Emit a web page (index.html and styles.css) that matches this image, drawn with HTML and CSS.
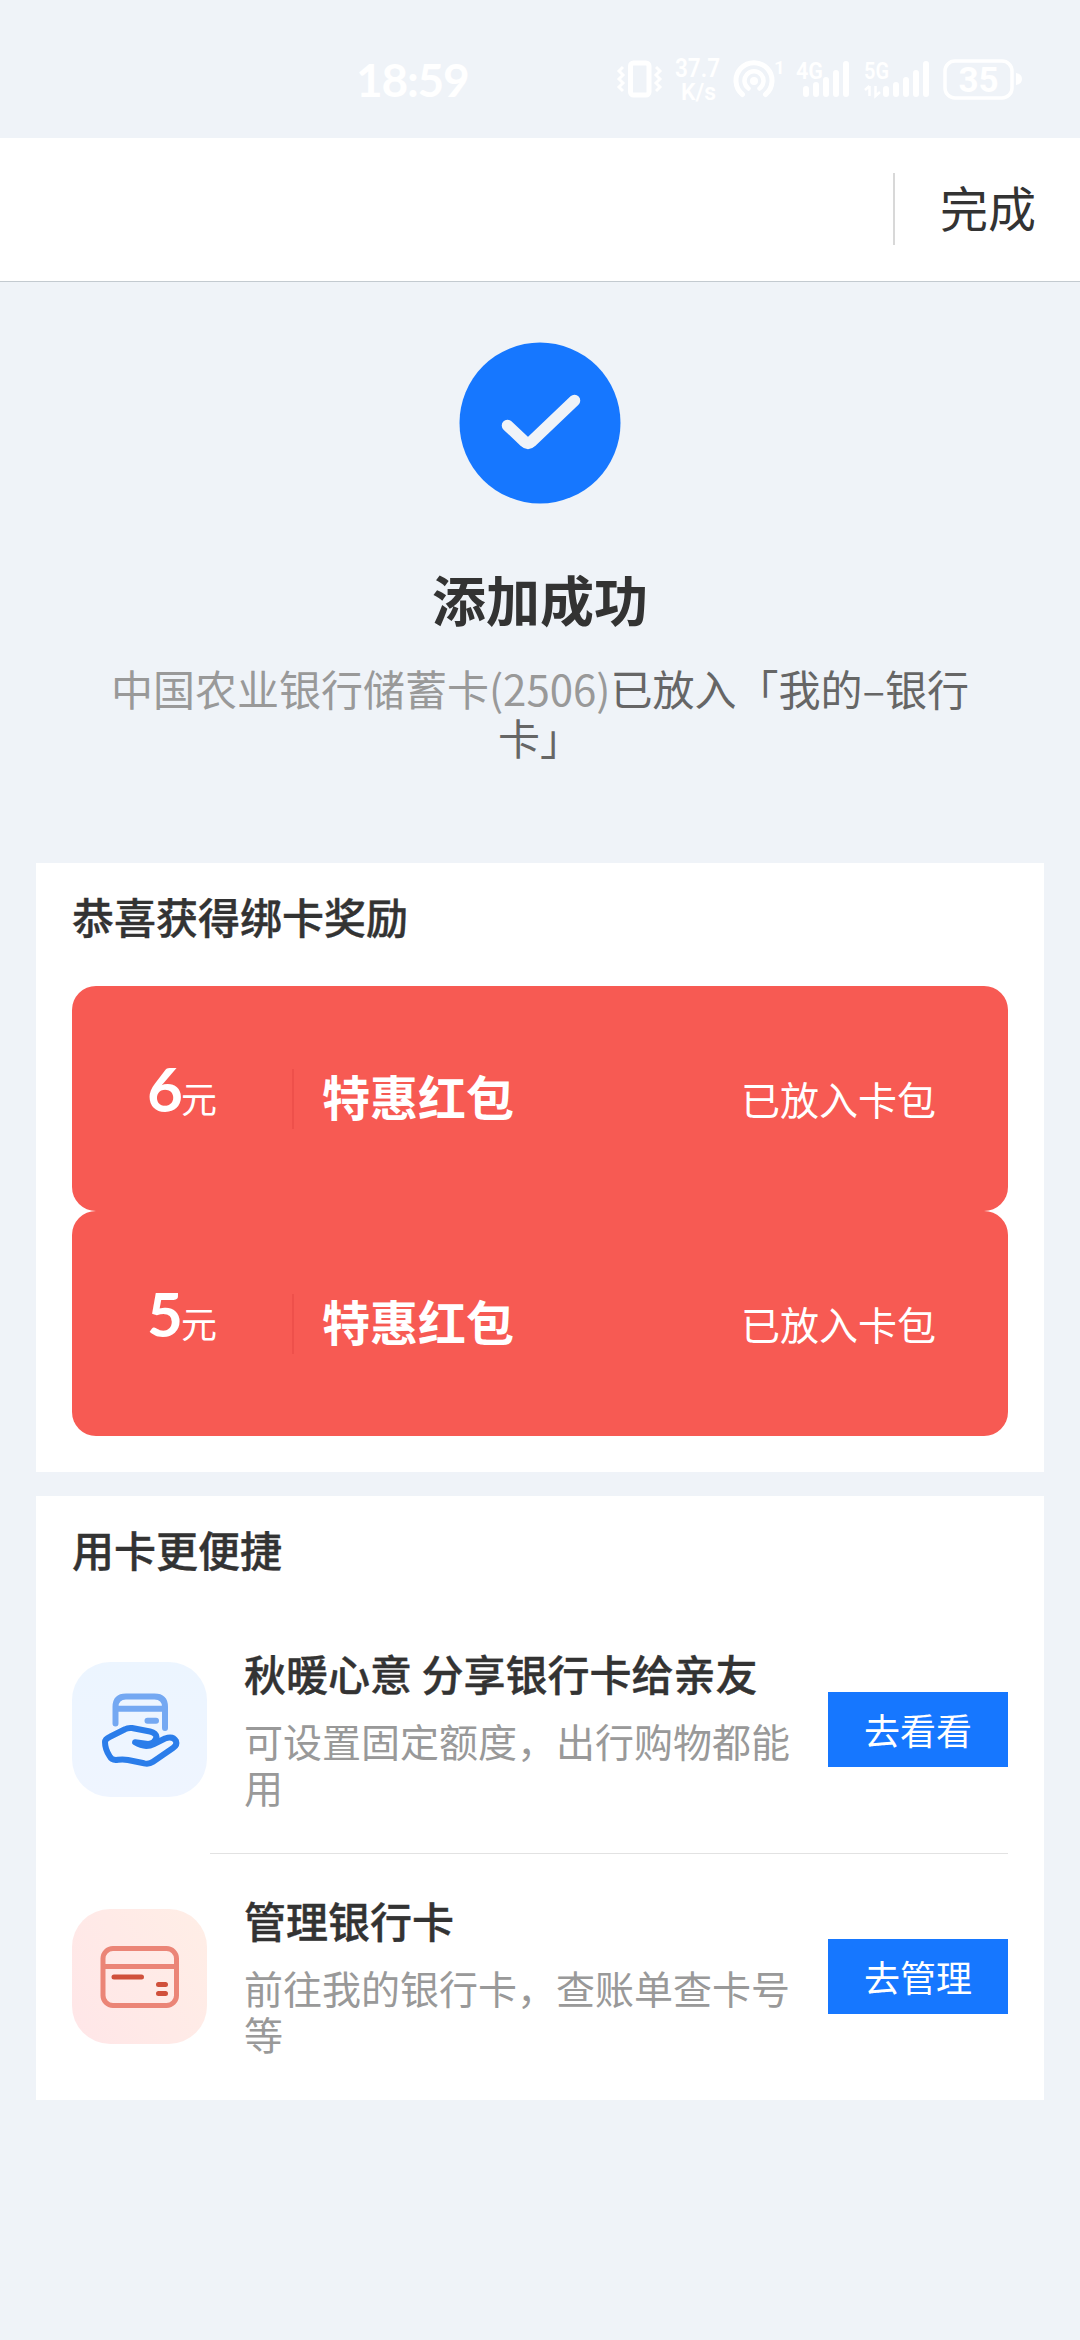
FILE: index.html
```html
<!DOCTYPE html>
<html lang="zh-CN">
<head>
<meta charset="utf-8">
<title>添加成功</title>
<link rel="stylesheet" href="styles.css">
</head>
<body>
<div class="status-bar">
  <span class="clock">18:59</span>
  <svg class="status-icons" width="420" height="60" viewBox="610 50 420 60" fill="none" stroke="#fff">
    <g stroke-width="3">
      <path d="M623 67l-4 4 4 4-4 4 4 4-4 4 4 4M656 67l4 4-4 4 4 4-4 4 4 4-4 4"/>
      <rect x="630.5" y="63" width="18.500" height="32" rx="3" stroke-width="5"/>
    </g>
    <g fill="#fff" stroke="none" class="status-text">
      <text x="675" y="77" font-size="25" textLength="45" lengthAdjust="spacingAndGlyphs">37.7</text>
      <text x="681" y="99.500" font-size="24" textLength="35" lengthAdjust="spacingAndGlyphs">K/s</text>
      <text x="774" y="74" font-size="19">1</text>
      <text x="796" y="78.500" font-size="23" textLength="27" lengthAdjust="spacingAndGlyphs">4G</text>
      <text x="864" y="78.500" font-size="23" textLength="25" lengthAdjust="spacingAndGlyphs">5G</text>
    </g>
    <g stroke-width="5" stroke-linecap="round">
      <path d="M742.500 94.500a18 18 0 1 1 23 0"/>
      <path d="M748.500 88.500a9.500 9.500 0 1 1 11 0" stroke-width="4.500"/>
      <circle cx="754" cy="81" r="4" fill="#fff" stroke="none"/>
      <path stroke-width="6" d="M806 89v5M816 85v9M826 80v14M836 73v21M846 64v30M886 89v5M896 85v9M906 80v14M916 73v21M926 64v30"/>
    </g>
    <path stroke-width="2.500" d="M869.500 86v10M865 90l4.500-4M875.500 86v10l4.500-4"/>
    <rect x="945" y="61" width="67" height="37" rx="10" stroke-width="3.500"/>
    <path d="M1016 73q6 1 6 6t-6 6z" fill="#fff" stroke="none"/>
    <text class="battery-text" x="978.500" y="92" text-anchor="middle">35</text>
  </svg>
</div>

<header class="navbar">
  <span class="navbar-divider"></span>
  <span class="navbar-done">完成</span>
</header>

<main>
  <section class="result">
    <svg class="result-icon" width="162" height="162" viewBox="0 0 162 162" fill="none">
      <circle cx="81" cy="81" r="80.500" fill="#1677ff"/>
      <path d="M48.500 83.500L66 100q3 3 6 0L115.500 58.500" stroke="#eff3f8" stroke-width="11.500" stroke-linecap="round" stroke-linejoin="round"/>
    </svg>
    <h1 class="result-title">添加成功</h1>
    <p class="result-desc"><span class="muted">中国农业银行储蓄卡(2506)</span>已放入「我的–银行卡」</p>
  </section>

  <section class="card rewards">
    <h2 class="card-title">恭喜获得绑卡奖励</h2>
    <div class="coupon">
      <div class="coupon-amount"><b>6</b>元</div>
      <div class="coupon-name">特惠红包</div>
      <div class="coupon-state">已放入卡包</div>
    </div>
    <div class="coupon">
      <div class="coupon-amount"><b>5</b>元</div>
      <div class="coupon-name">特惠红包</div>
      <div class="coupon-state">已放入卡包</div>
    </div>
  </section>

  <section class="card services">
    <h2 class="card-title">用卡更便捷</h2>
    <div class="service">
      <svg class="service-icon share" viewBox="0 0 135 135" fill="none" stroke-linecap="round" stroke-linejoin="round">
        <g stroke="#74a8f2" stroke-width="6">
          <path d="M43.500 61.500V45q0-10.500 10.500-10.500H82.500Q93 34.500 93 45V66"/>
          <path d="M44 46.700H92M75.500 58.700H84"/>
        </g>
        <path stroke="#2b7dea" stroke-width="6" d="M38 74.700L53 67.300Q56 65.500 60 66L78 69.500Q84 71 84.500 75Q83 82 76 82L63 80.300Q73 86.500 82 82L93 76.500Q101 73.500 104 79Q105.500 83 101 86L81 99.700Q77 102.500 72 101.300L56 98Q51 97 46 97.800Q40 99 37.500 94Q33 87 33 80Q33 77 38 74.700Z"/>
      </svg>
      <div class="service-text">
        <h3>秋暖心意 分享银行卡给亲友</h3>
        <p>可设置固定额度，出行购物都能用</p>
      </div>
      <button class="service-button">去看看</button>
    </div>
    <div class="service">
      <svg class="service-icon manage" viewBox="0 0 135 135" fill="none" stroke-linecap="round">
        <g stroke="#eb8577" stroke-width="5">
          <rect x="31" y="39.500" width="73.500" height="57" rx="10"/>
          <path d="M32 57.500H104"/>
        </g>
        <path stroke="#d0503b" stroke-width="5" d="M42 68H69.500M86.500 75.500H93.500M86.500 84.500H93.500"/>
      </svg>
      <div class="service-text">
        <h3>管理银行卡</h3>
        <p>前往我的银行卡，查账单查卡号等</p>
      </div>
      <button class="service-button">去管理</button>
    </div>
  </section>
</main>
</body>
</html>
```

FILE: styles.css
```css
* {
  box-sizing: border-box;
}

body {
  margin: 0;
  min-height: 2340px;
  background: #eff3f8;
  color: #333;
  font-family: "Noto Sans CJK SC", sans-serif;
}

h1, h2, h3, p {
  margin: 0;
}

.status-bar {
  display: flex;
  justify-content: space-between;
  align-items: center;
  height: 138px;
  padding: 22px 50px 0 356px;
  color: #fff;
}

.clock {
  font: bold 46px/60px Lato, sans-serif;
  letter-spacing: -1.2px;
}

.status-text {
  font-family: Roboto, sans-serif;
  font-weight: 600;
}

.battery-text {
  fill: #fff;
  stroke: none;
  font: bold 35px Roboto, sans-serif;
}

.navbar {
  display: flex;
  justify-content: flex-end;
  align-items: center;
  height: 144px;
  padding: 0 44px 2px 0;
  background: #fff;
  border-bottom: 1px solid #c3cad0;
}

.navbar-divider {
  width: 2px;
  height: 72px;
  margin-right: 45px;
  background: #d8d8d8;
}

.navbar-done {
  padding-bottom: 5px;
  font-size: 48px;
  line-height: 72px;
}

.result {
  display: flex;
  flex-direction: column;
  align-items: center;
  height: 581px;
  padding-top: 60px;
}

.result-title {
  margin-top: 63px;
  font-size: 54px;
  line-height: 64px;
  font-weight: 700;
}

.result-desc {
  width: 870px;
  margin-top: 32px;
  color: #666;
  font-size: 42px;
  line-height: 49px;
  text-align: center;
}

.muted {
  color: #999;
}

.card {
  margin: 0 36px;
  padding: 0 36px;
  background: #fff;
}

.card-title {
  padding-top: 23px;
  font-size: 42px;
  line-height: 60px;
  font-weight: 500;
  -webkit-text-stroke: 0.4px;
}

.rewards {
  height: 609px;
  margin-bottom: 24px;
}

.rewards .card-title {
  height: 123px;
}

.coupon {
  display: flex;
  align-items: center;
  height: 225px;
  padding-right: 72px;
  border-radius: 24px;
  background: #f75a53;
  color: #fff;
}

.coupon-amount {
  display: flex;
  justify-content: center;
  width: 222px;
  height: 60px;
  border-right: 2px solid #ee504b;
  font-size: 36px;
  line-height: 56px;
}

.coupon-amount b {
  font: bold 62px/38px Lato, sans-serif;
  letter-spacing: -2px;
}

.coupon-name {
  flex: 1;
  margin-left: 28px;
  padding-bottom: 8px;
  font-size: 48px;
  line-height: 60px;
  font-weight: 700;
}

.coupon-state {
  padding-bottom: 2px;
  font-size: 39px;
  line-height: 60px;
}

.services {
  height: 604px;
}

.services .card-title {
  height: 110px;
}

.service {
  position: relative;
  display: flex;
  align-items: center;
  height: 247px;
}

.service + .service::before {
  content: "";
  position: absolute;
  top: 0;
  left: 138px;
  right: 0;
  height: 1px;
  background: #e2e2e2;
}

.service-icon {
  flex: none;
  width: 135px;
  height: 135px;
  border-radius: 38px;
}

.share {
  background: linear-gradient(#ecf5ff, #eff5ff);
}

.manage {
  background: linear-gradient(60deg, #ffe6e8, #ffeee6);
}

.service-text {
  flex: 1;
  margin-left: 37px;
  padding-bottom: 8px;
}

.service-text h3 {
  font-size: 42px;
  line-height: 60px;
  font-weight: 500;
  -webkit-text-stroke: 0.4px;
  white-space: nowrap;
}

.service-text p {
  width: 560px;
  margin-top: 14px;
  color: #999;
  font-size: 39px;
  line-height: 46px;
}

.service-button {
  flex: none;
  width: 180px;
  height: 75px;
  padding: 0;
  border: 0;
  background: #1677ff;
  color: #fff;
  font: 36px/75px "Noto Sans CJK SC", sans-serif;
}
```
